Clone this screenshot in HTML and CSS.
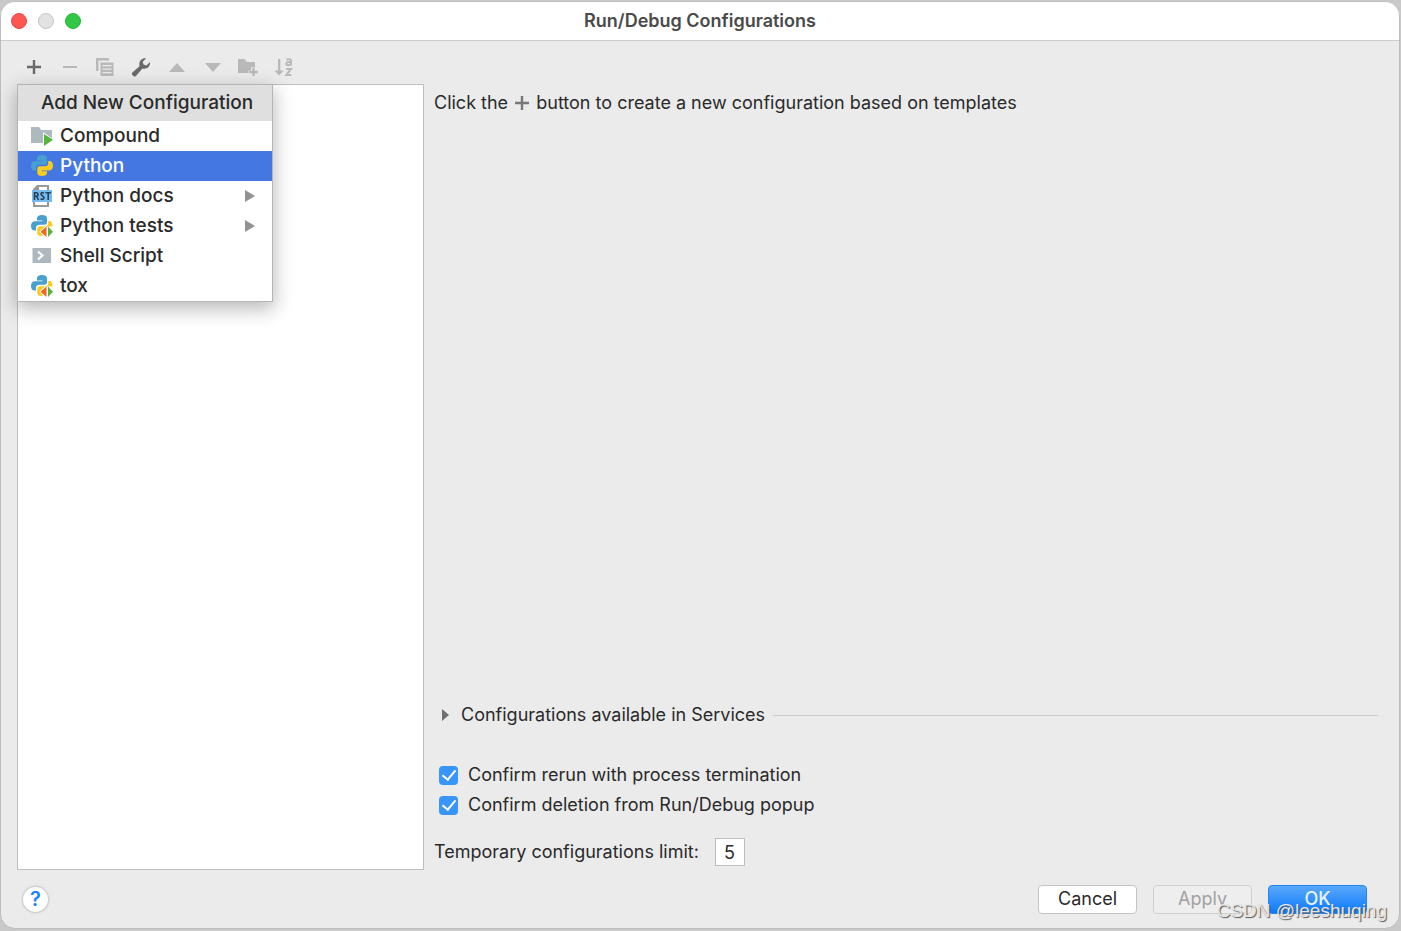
FILE: index.html
```html
<!DOCTYPE html>
<html lang="en">
<head>
<meta charset="utf-8">
<title>Run/Debug Configurations</title>
<link rel="stylesheet" href="styles.css">
</head>
<body>
<svg class="defs" aria-hidden="true">
  <defs>
    <symbol id="python" viewBox="0 0 22 22">
      <path class="py-blue" d="M11 0C7.500 0 6 1.200 6 3.500V5.500H11.500V6.300H4C1.500 6.300 0 8 0 11S1.500 15.500 3.500 15.500H5V13C5 11 6.500 9.800 8.500 9.800H13.500C15 9.800 16 8.800 16 7.300V3.500C16 1.200 14.500 0 11 0Z"/>
      <path class="py-yellow" d="M17.200 6V8.500C17.200 10.300 15.700 11.300 14 11.300H9C7.300 11.300 6.300 12.300 6.300 14V18C6.300 20 8 21 11 21S16 20 16 18V16.200H11V15.400H18C20.500 15.400 22 13.700 22 10.700S20.500 6 18.500 6Z"/>
    </symbol>
    <symbol id="pytest" viewBox="0 0 22 22">
      <path class="py-blue" d="M11 0C7.500 0 6 1.200 6 3.500V5.500H11.500V6.300H4C1.500 6.300 0 8 0 11S1.500 15.500 3.500 15.500H5V13C5 11 6.500 9.800 8.500 9.800H13.500C15 9.800 16 8.800 16 7.300V3.500C16 1.200 14.500 0 11 0Z"/>
      <path class="py-yellow" d="M17.200 6V8.500C17.200 10.300 15.700 11.300 14 11.300H9C7.300 11.300 6.300 12.300 6.300 14V18C6.300 20 7.500 21 10.500 21H12L8.500 16.500L14 11.500H21.500C21.500 8 20.500 6 18.500 6Z"/>
      <path class="red" d="M15.500 11.500V22L9.500 16.800Z"/>
      <path class="green" d="M17 11.500V22L22 16.800Z"/>
    </symbol>
    <symbol id="plus" viewBox="0 0 14 14"><path d="M5.800 0H8.200V5.800H14V8.200H8.200V14H5.800V8.200H0V5.800H5.800Z"/></symbol>
  </defs>
</svg>
<main class="dialog">
  <header class="titlebar">
    <div class="lights">
      <button class="light close" aria-label="Close"></button>
      <button class="light minimize" aria-label="Minimize"></button>
      <button class="light expand" aria-label="Zoom"></button>
    </div>
    <h1>Run/Debug Configurations</h1>
  </header>

  <div class="toolbar">
    <button class="tool dark" aria-label="Add"><svg width="14" height="14"><use href="#plus"/></svg></button>
    <button class="tool" aria-label="Remove"><svg width="14" height="14" viewBox="0 0 14 14"><path d="M0 6H14V8H0Z"/></svg></button>
    <button class="tool" aria-label="Copy"><svg width="18" height="18" viewBox="0 0 18 18"><path fill-rule="evenodd" d="M0 0H13V2.500H2.500V13H0ZM4.500 4.500H17.500V18H4.500ZM6.500 7V8.300H15.500V7ZM6.500 10.500V11.800H15.500V10.500ZM6.500 14V15.300H15.500V14Z"/></svg></button>
    <button class="tool dark" aria-label="Edit templates"><svg width="20" height="20" viewBox="0 0 20 20"><path d="M1.100 15.700L8.500 9.200C7.500 4 10.500 .7 15.200 1.200L11.700 4.700L12.500 7.600L15.400 8.400L19 4.900C19.500 9.500 16.300 12.500 11.500 11.400L4.700 19.200C3 20.400-.2 17.300 1.100 15.700Z"/></svg></button>
    <button class="tool" aria-label="Move up"><svg width="16" height="9" viewBox="0 0 16 9"><path d="M0 9L8 0L16 9Z"/></svg></button>
    <button class="tool" aria-label="Move down"><svg width="16" height="9" viewBox="0 0 16 9"><path d="M0 0H16L8 9Z"/></svg></button>
    <button class="tool" aria-label="New folder"><svg width="20" height="18" viewBox="0 0 20 18"><path d="M0 1H6.500L9 4H17V9.500H13V12.500H10.500V15H0ZM14.300 10H16.700V12.800H19.700V15.200H16.700V18H14.300V15.200H11.300V12.800H14.300Z"/></svg></button>
    <button class="tool" aria-label="Sort alphabetically"><svg width="19" height="18" viewBox="0 0 19 18"><path d="M4 1H6.300V12.500H9.800L5.150 17.500L.5 12.500H4Z"/><path class="stroke" d="M12.500 1.800Q17 0 17 3V7.500M17 4Q12.300 3.500 12.300 5.700C12.300 8 16 7.500 17 5.500M12.300 10.900H17L12.300 16.900H17.300"/></svg></button>
  </div>

  <div class="content">
    <section class="tree" aria-label="Configurations">
      <div class="menu" role="menu" aria-labelledby="menu-title">
        <h2 id="menu-title">Add New Configuration</h2>
        <button role="menuitem"><svg width="22" height="22" viewBox="0 0 22 22"><path class="grey" d="M0 2H8L10 5H21V18H0Z"/><path class="cutout" d="M12 7L22 14V20H12Z"/><path class="green" d="M13 9L22 14.800L13 21Z"/></svg><span>Compound</span></button>
        <button role="menuitem" class="selected"><svg width="22" height="22"><use href="#python"/></svg><span>Python</span></button>
        <button role="menuitem"><svg width="22" height="22" viewBox="0 0 22 22"><path class="page" d="M2 5V4L6 0H18V5H16V2H8V5ZM2 17H4V20H16V17H18V22H2Z"/><path class="plate" d="M1 5H21V17H1Z"/><path class="rst" d="M3.500 15V7M3.500 7.800H5.300Q7 7.800 7 9.500T5.300 11.200H3.500M5.500 11L7.500 15M13 8Q10 7.200 10 9C10 11 13 10.800 13 12.800Q13 14.800 9.500 14M14.500 7.800H20M17.200 7.500V15"/></svg><span>Python docs</span><i class="arrow"></i></button>
        <button role="menuitem"><svg width="22" height="22"><use href="#pytest"/></svg><span>Python tests</span><i class="arrow"></i></button>
        <button role="menuitem"><svg width="22" height="22" viewBox="0 0 22 22"><path class="grey" d="M1.500 3H20V18H1.500Z"/><path class="prompt" d="M7 6.500L11.500 10.500L7 14.500"/></svg><span>Shell Script</span></button>
        <button role="menuitem"><svg width="22" height="22"><use href="#pytest"/></svg><span>tox</span></button>
      </div>
    </section>

    <section class="details">
      <p class="hint">Click the <svg width="14" height="14" role="img" aria-label="plus"><use href="#plus"/></svg> button to create a new configuration based on templates</p>
      <button class="services" aria-expanded="false"><i class="arrow small"></i><span>Configurations available in Services</span></button>
      <div class="checks">
        <label><input type="checkbox" checked><span>Confirm rerun with process termination</span></label>
        <label><input type="checkbox" checked><span>Confirm deletion from Run/Debug popup</span></label>
      </div>
      <div class="limit"><label for="limit">Temporary configurations limit:</label><input id="limit" type="text" value="5"></div>
    </section>
  </div>

  <footer class="footer">
    <button class="help" aria-label="Help">?</button>
    <div class="actions">
      <button class="btn">Cancel</button>
      <button class="btn" disabled>Apply</button>
      <button class="btn primary">OK</button>
    </div>
  </footer>
  <div class="watermark">CSDN @leeshuqing</div>
</main>
</body>
</html>
```
FILE: styles.css
```css
* { box-sizing: border-box; }
body {
  margin: 0;
  min-height: 100vh;
  padding: 1px 1px 2px 0;
  display: flex;
  background: #c9c9c9;
  font: 18px/20px Inter, "Liberation Sans", sans-serif;
  color: #2a2a2a;
}
h1, h2, p { margin: 0; }
button, input { font: inherit; color: inherit; margin: 0; }
button { border: 0; padding: 0; background: none; }
.defs { position: absolute; width: 0; height: 0; }

.dialog {
  position: relative;
  flex: 1;
  display: flex;
  flex-direction: column;
  background: #ebebeb;
  border: 1px solid #bdbdbd;
  border-radius: 15px;
}
.titlebar {
  display: grid;
  grid-template-columns: 1fr auto 1fr;
  align-items: center;
  height: 39px;
  padding: 0 10px;
  background: #fff;
  border-bottom: 1px solid #cdcdcd;
  border-radius: 14px 14px 0 0;
}
.titlebar h1 { font-size: 18px; line-height: 20px; font-weight: 600; color: #4a4a4a; }
.lights { display: flex; gap: 11px; }
.light { width: 16px; height: 16px; border-radius: 50%; border: 1px solid; }
.close { background: #fc5753; border-color: #e94643; }
.minimize { background: #e2e2e2; border-color: #c6c6c6; }
.expand { background: #33c748; border-color: #29b53a; }

.toolbar {
  display: flex;
  justify-content: space-between;
  align-items: center;
  width: 272px;
  height: 43px;
  margin-left: 22px;
  padding-top: 9px;
}
.tool { width: 22px; height: 24px; display: grid; place-items: center; color: #b9b9b9; }
.tool.dark { color: #6a6a6a; }
.tool svg { fill: currentColor; }
.tool .stroke { fill: none; stroke: currentColor; stroke-width: 2; }

.content {
  flex: 1;
  display: grid;
  grid-template-columns: 407px 1fr;
  gap: 10px;
  padding: 0 21px 0 16px;
}
.tree { position: relative; background: #fff; border: 1px solid #bfbfbf; }
.menu {
  position: absolute;
  top: 0;
  left: 0;
  width: 254px;
  background: #fff;
  outline: 1px solid #b5b5b5;
  box-shadow: 0 6px 18px 2px rgb(0 0 0 / 28%);
  font-size: 19px;
  font-weight: 500;
}
.menu h2 { font: inherit; line-height: 36px; text-align: center; padding-left: 4px; background: #dfdfdf; }
.menu button {
  display: flex;
  align-items: center;
  gap: 7px;
  width: 100%;
  height: 30px;
  padding: 0 17px 0 13px;
}
.menu .selected { background: #4577e2; color: #fff; }
.arrow {
  margin-left: auto;
  border-left: 10px solid #929292;
  border-top: 6px solid transparent;
  border-bottom: 6px solid transparent;
}
.py-blue { fill: #48a0cf; }
.py-yellow { fill: #f7cb20; }
.red { fill: #f26522; }
.green { fill: #56b33c; }
.grey { fill: #adb8bf; }
.cutout { fill: #fff; }
.page { fill: #999; }
.plate { fill: #75bbed; }
.rst { fill: none; stroke: #24415a; stroke-width: 1.600; }
.prompt { fill: none; stroke: #fff; stroke-width: 2.200; }

.details { display: flex; flex-direction: column; padding-bottom: 4px; }
.hint { padding-top: 9px; }
.hint svg { fill: #777; margin: 0 2px; vertical-align: -1px; }
.services { display: flex; align-items: center; margin-top: auto; padding-left: 8px; text-align: left; }
.services::after { content: ""; flex: 1; height: 1px; margin-left: 8px; background: #c9c9c9; }
.arrow.small { margin: 0 12px 0 0; border-width: 6px 0 6px 7px; border-left-color: #707070; }
.checks { display: grid; gap: 10px; margin: 40px 0 23px; padding-left: 5px; }
.checks label { display: flex; align-items: center; gap: 10px; }
.checks input {
  appearance: none;
  width: 19px;
  height: 19px;
  border-radius: 4px;
  background: #3895fb;
  display: grid;
  place-items: center;
}
.checks input:checked::after {
  content: "";
  width: 6px;
  height: 11px;
  margin-bottom: 3px;
  border: solid #fff;
  border-width: 0 2px 2px 0;
  transform: rotate(40deg);
}
.limit { display: flex; align-items: center; gap: 16px; }
.limit input { width: 30px; height: 28px; padding: 0 8px; border: 1px solid #bebebe; background: #fff; }

.footer { display: flex; align-items: center; justify-content: space-between; height: 58px; padding: 0 32px 0 22px; }
.help {
  width: 25px;
  height: 25px;
  border-radius: 50%;
  background: #fff;
  box-shadow: 0 0 2px 1px #c4c4c4;
  color: #1a83fb;
  font-size: 20px;
  font-weight: 600;
}
.actions { display: flex; gap: 16px; }
.btn { width: 99px; height: 29px; border: 1px solid #c4c4c4; border-radius: 4px; background: #fff; }
.btn:disabled { background: #eee; border-color: #cfcfcf; color: #a1a1a1; }
.primary { border-color: #2685f5; background: linear-gradient(#59a9fb, #0d78fc); color: #e9f3ff; font-weight: 500; }
.watermark {
  position: absolute;
  right: 12px;
  bottom: 7px;
  font: 19px/20px "Liberation Sans", sans-serif;
  color: #e6e6e6;
  text-shadow: 1px 1px 1px #555;
  pointer-events: none;
}
```
